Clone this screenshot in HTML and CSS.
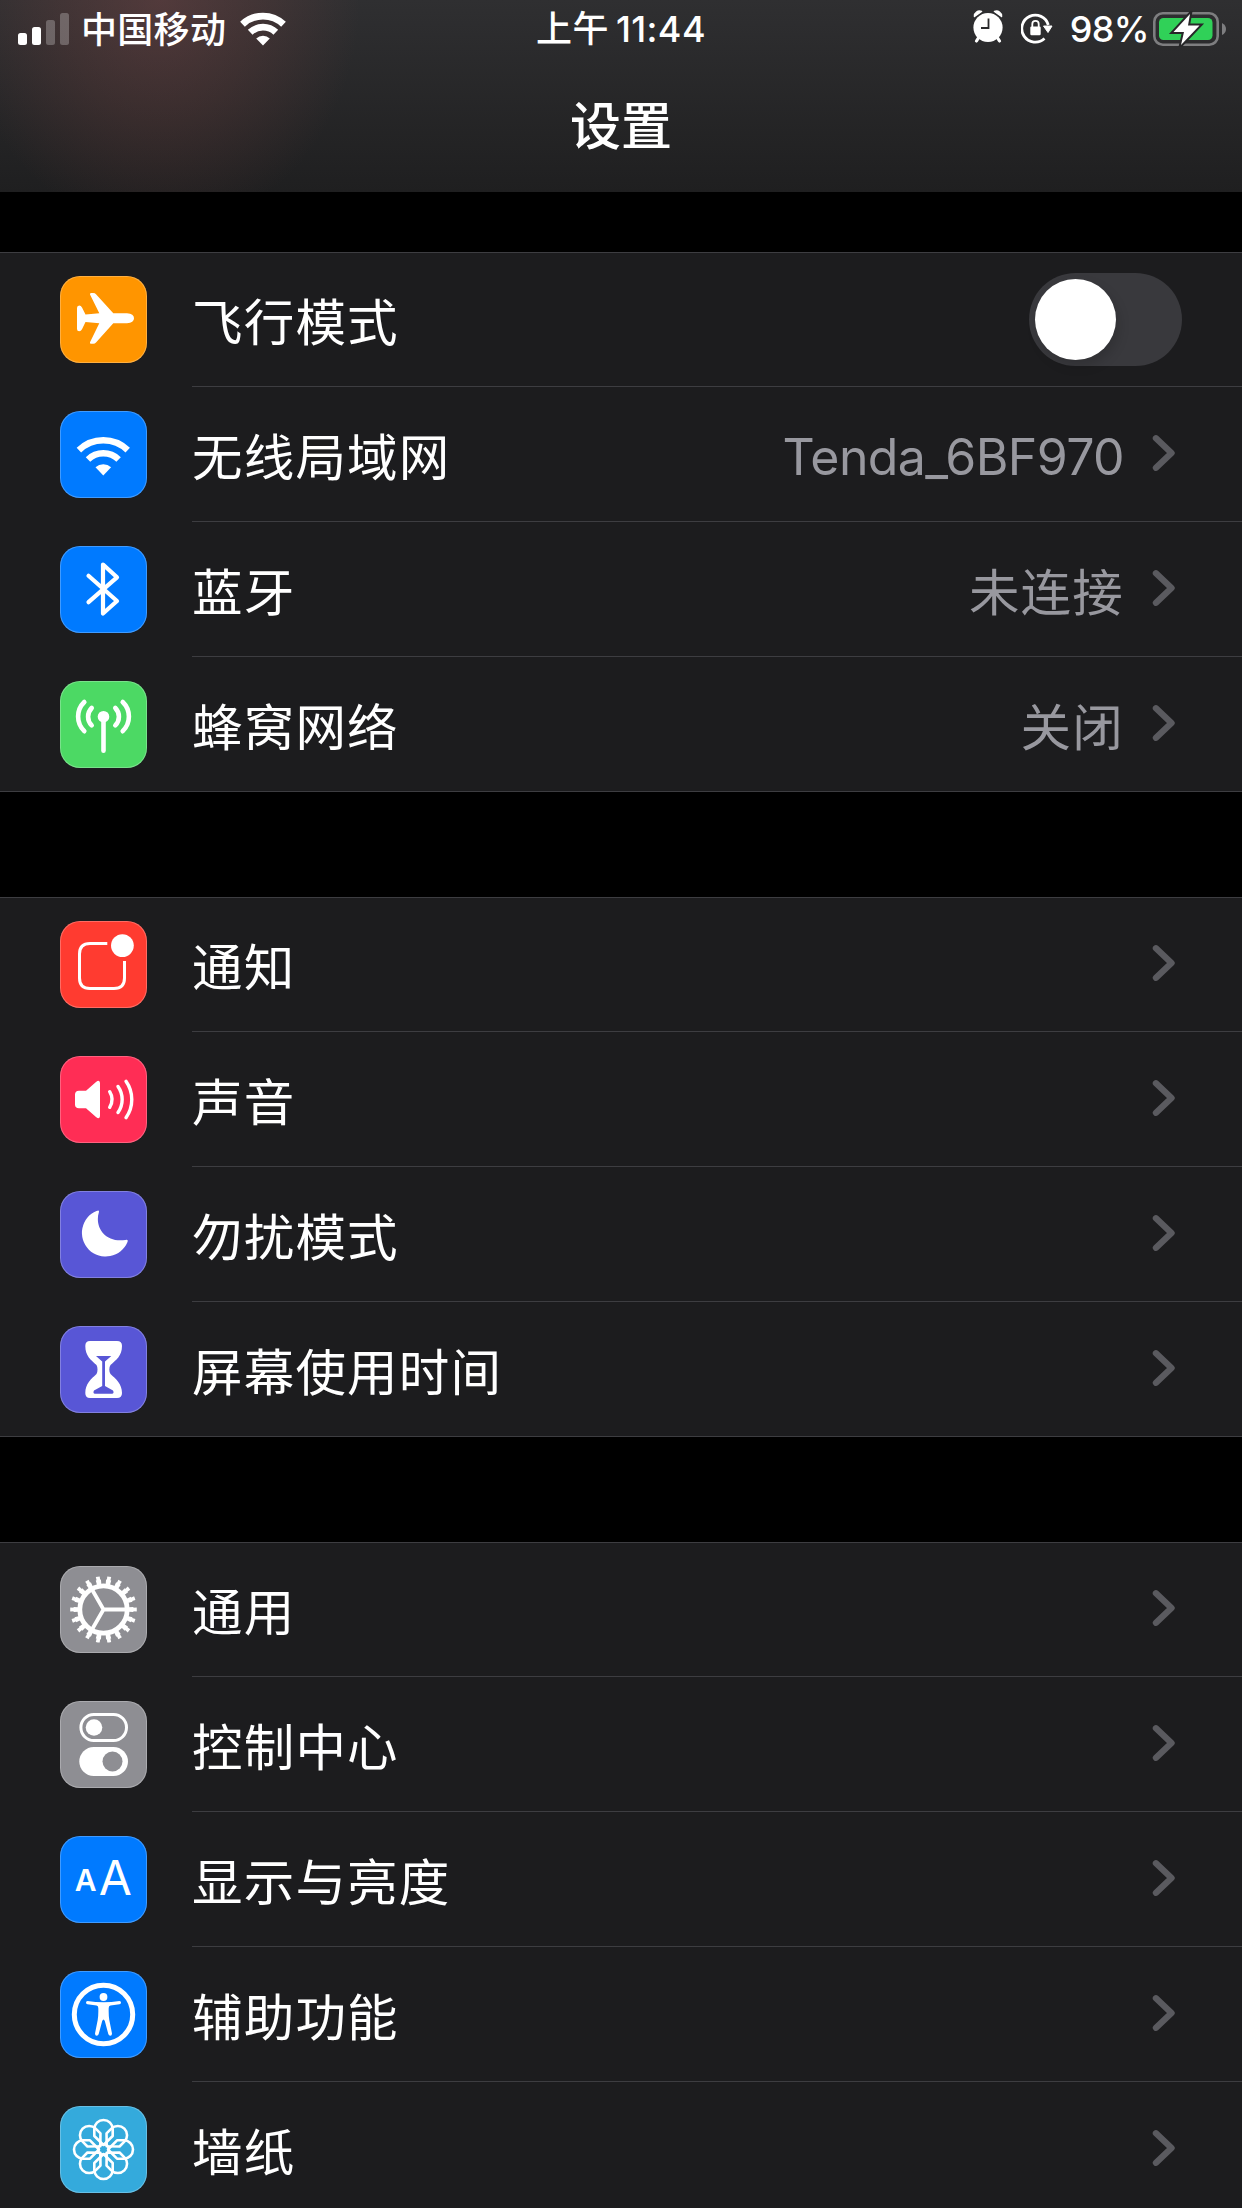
FILE: index.html
```html
<!DOCTYPE html>
<html lang="zh-CN">
<head>
  <meta charset="UTF-8">
  <meta name="viewport" content="width=device-width, initial-scale=1.0">
  <title>设置</title>
  <link rel="stylesheet" href="styles.css">
</head>
<body>
  <svg class="defs" width="0" height="0">
    <symbol id="chevron" viewBox="0 0 24 38">
      <path d="M4 4.3 L19.5 19 L4 33.7" fill="none" stroke="#5a5a5f" stroke-width="6.4" stroke-linecap="round" stroke-linejoin="round"/>
    </symbol>
    <path id="petal" d="M0 -4.5 L-9.2 -13.5 V-20.3 A9.2 9.2 0 0 1 9.2 -20.3 V-13.5 Z"/>
  </svg>

  <header class="header">
    <div class="status-bar">
      <div class="status-left">
        <svg class="signal" width="51" height="33" viewBox="0 0 51 33" fill="#fff">
          <rect x="0" y="20" width="9" height="12" rx="2.5"/>
          <rect x="14" y="14" width="9" height="18" rx="2.5"/>
          <rect x="28" y="7" width="9" height="25" rx="2.5" opacity=".25"/>
          <rect x="42" y="0" width="9" height="32" rx="2.5" opacity=".25"/>
        </svg>
        <span class="carrier">中国移动</span>
        <svg class="wifi" width="46" height="34" viewBox="0 0 46 34">
          <path d="M2.5 12.2 A29.8 29.8 0 0 1 43.5 12.2 M10.2 20.3 A18.6 18.6 0 0 1 35.8 20.3" fill="none" stroke="#fff" stroke-width="6.8"/>
          <path d="M23 33.5 L16.2 26.6 A9.8 9.8 0 0 1 29.8 26.6 Z" fill="#fff"/>
        </svg>
      </div>
      <div class="time"><span class="ampm">上午</span>11:44</div>
      <div class="status-right">
        <svg class="alarm" width="30" height="34" viewBox="0 0 30 34">
          <path d="M6 27 L3.5 31 M24 27 L26.5 31" stroke="#fff" stroke-width="3.2" stroke-linecap="round"/>
          <path d="M1.5 6.5 A5 5 0 0 1 8.5 1.5 Z M28.5 6.5 A5 5 0 0 0 21.5 1.5 Z" fill="#fff" stroke="#fff" stroke-width="1.5" stroke-linejoin="round"/>
          <circle cx="15" cy="17.5" r="14.6" fill="#fff"/>
          <path d="M15.5 8.5 V18 H8" fill="none" stroke="#2a2a2c" stroke-width="1.8"/>
        </svg>
        <svg class="lock" width="32" height="32" viewBox="0 0 32 32">
          <path d="M23.5 25.5 A13.5 13.5 0 1 1 27.3 12" fill="none" stroke="#fff" stroke-width="2.8"/>
          <path d="M22.5 13 H31 L27 19.5 Z" fill="#fff" stroke="#fff" stroke-width="1" stroke-linejoin="round"/>
          <rect x="9.3" y="13.5" width="10.4" height="8.7" rx="1.2" fill="#fff"/>
          <path d="M11.3 14 V11 A3.2 3.2 0 0 1 17.7 11 V14" fill="none" stroke="#fff" stroke-width="1.8"/>
        </svg>
        <span class="percent">98%</span>
        <svg class="battery" width="74" height="36" viewBox="0 0 74 36">
          <rect x="1.3" y="2.3" width="63.4" height="31.4" rx="8.5" fill="none" stroke="#7e7e80" stroke-width="2.6"/>
          <path d="M69 12 Q73 14 73 18 Q73 22 69 24 Z" fill="#7e7e80"/>
          <rect x="6" y="7" width="53.5" height="22" rx="4.5" fill="#30d158"/>
          <path d="M37 3 L20.5 21 H31 L28 34 L46.5 14.5 H35 Z" fill="#fff" stroke="#272729" stroke-width="4" paint-order="stroke"/>
        </svg>
      </div>
    </div>
    <h1 class="title">设置</h1>
  </header>

  <main class="settings">
    <section class="group">
      <div class="row">
        <div class="icon orange">
          <svg viewBox="0 0 87 87" fill="#fff">
            <path d="M17 32 Q17 29.5 19.2 29.5 Q21 29.5 22 31.5 L25.5 38.6 L39.3 37.3 L30 18.5 Q29.5 17 31.2 17 H33.2 Q35 17 36 18.2 L53.3 37.3 H67 Q74 37.8 74 42.3 Q74 47 67 47.3 H53.3 L36 66.6 Q35 67.8 33.2 67.8 H31.2 Q29.5 67.8 30 66.3 L39.3 47.3 L25.5 46 L22 53.2 Q21 55.2 19.2 55.2 Q17 55.2 17 53 Z"/>
          </svg>
        </div>
        <div class="row-body">
          <span class="label">飞行模式</span>
          <div class="toggle"><div class="knob"></div></div>
        </div>
      </div>
      <div class="row">
        <div class="icon blue">
          <svg viewBox="0 0 87 87">
            <path d="M18.9 39.1 A35.1 35.1 0 0 1 67.7 39.1 M28 48.5 A22 22 0 0 1 58.6 48.5" fill="none" stroke="#fff" stroke-width="6.4"/>
            <path d="M43.3 64.5 L35.5 56.3 A11.7 11.7 0 0 1 51.1 56.3 Z" fill="#fff"/>
          </svg>
        </div>
        <div class="row-body">
          <span class="label">无线局域网</span>
          <span class="value latin">Tenda_6BF970</span>
          <svg class="chevron"><use href="#chevron"/></svg>
        </div>
      </div>
      <div class="row">
        <div class="icon blue">
          <svg viewBox="0 0 87 87">
            <path d="M28.5 29.8 L57 55 L43 67.5 V18.5 L57 31.3 L28.5 56.2" fill="none" stroke="#fff" stroke-width="4.2" stroke-linecap="round" stroke-linejoin="round"/>
          </svg>
        </div>
        <div class="row-body">
          <span class="label">蓝牙</span>
          <span class="value">未连接</span>
          <svg class="chevron"><use href="#chevron"/></svg>
        </div>
      </div>
      <div class="row">
        <div class="icon green">
          <svg viewBox="0 0 87 87" fill="none" stroke="#fff" stroke-width="4.6" stroke-linecap="round">
            <circle cx="43.5" cy="35.7" r="5.8" fill="#fff" stroke="none"/>
            <path d="M43.5 37 V69.7"/>
            <path d="M31.7 27 A12.3 12.3 0 0 0 31.7 44.4 M55.3 27 A12.3 12.3 0 0 1 55.3 44.4"/>
            <path d="M24.3 21 A20.3 20.3 0 0 0 24.3 50.2 M62.7 21 A20.3 20.3 0 0 1 62.7 50.2"/>
          </svg>
        </div>
        <div class="row-body">
          <span class="label">蜂窝网络</span>
          <span class="value">关闭</span>
          <svg class="chevron"><use href="#chevron"/></svg>
        </div>
      </div>
    </section>

    <section class="group">
      <div class="row">
        <div class="icon red">
          <svg viewBox="0 0 87 87">
            <path d="M47.3 22.5 H30 Q19.5 22.5 19.5 33 V57 Q19.5 67.5 30 67.5 H54 Q64.5 67.5 64.5 57 V40" fill="none" stroke="#fff" stroke-width="3"/>
            <circle cx="62.4" cy="24.6" r="11.4" fill="#fff"/>
          </svg>
        </div>
        <div class="row-body">
          <span class="label">通知</span>
          <svg class="chevron"><use href="#chevron"/></svg>
        </div>
      </div>
      <div class="row">
        <div class="icon pink">
          <svg viewBox="0 0 87 87">
            <path d="M19 34.7 H26 L36 26 Q37.5 24.8 38.5 24.8 Q40 25 40 27 V60 Q40 62 38.5 62.2 Q37.5 62.2 36 61 L26 52.3 H19 Q15 52.3 15 48.5 V38.5 Q15 34.7 19 34.7 Z" fill="#fff"/>
            <path d="M49.7 35.7 A14.9 14.9 0 0 1 49.7 51.3 M58 30.5 A22.4 22.4 0 0 1 58 56.5 M66 25.3 A31.5 31.5 0 0 1 66 61.7" fill="none" stroke="#fff" stroke-width="3.4" stroke-linecap="round"/>
          </svg>
        </div>
        <div class="row-body">
          <span class="label">声音</span>
          <svg class="chevron"><use href="#chevron"/></svg>
        </div>
      </div>
      <div class="row">
        <div class="icon purple">
          <svg viewBox="0 0 87 87">
            <path d="M36.5 20 Q39.5 18.5 38.9 21.2 C34.5 35 44 52 65.3 49 Q68.5 48 67.5 51 A23.7 23.7 0 1 1 36.5 20 Z" fill="#fff"/>
          </svg>
        </div>
        <div class="row-body">
          <span class="label">勿扰模式</span>
          <svg class="chevron"><use href="#chevron"/></svg>
        </div>
      </div>
      <div class="row">
        <div class="icon purple">
          <svg viewBox="0 0 87 87">
            <path d="M30 15 H57 Q62 15 62 20 C62 30 56 34 50.5 39 Q49.3 40.5 49.3 43.5 Q49.3 46.5 50.5 48 C56 53 62 58 62 67 Q62 72 57 72 H30 Q25.3 72 25.3 67 C25.3 58 31 53 36.5 48 Q37.5 46.5 37.5 43.5 Q37.5 40.5 36.5 39 C31 34 25.3 30 25.3 20 Q25.3 15 30 15 Z" fill="#fff"/>
            <path d="M36 30 H51.3 L45 35.5 V60 L53 64.5 Q54.5 67.5 52 67.7 H35 Q32.5 67.500 34 64.5 L42.2 60 V35.5 Z" fill="#5856d6"/>
          </svg>
        </div>
        <div class="row-body">
          <span class="label">屏幕使用时间</span>
          <svg class="chevron"><use href="#chevron"/></svg>
        </div>
      </div>
    </section>

    <section class="group">
      <div class="row">
        <div class="icon gray">
          <svg viewBox="0 0 87 87" fill="none" stroke="#fff">
            <circle cx="43.5" cy="43.5" r="23.7" stroke-width="4.8"/>
            <circle cx="43.5" cy="43.5" r="27.5" stroke-width="5" pathLength="180" stroke-dasharray="5 5" stroke-dashoffset="2.5"/>
            <circle cx="43.5" cy="43.5" r="31.2" stroke-width="4.2" pathLength="180" stroke-dasharray="3.4 6.6" stroke-dashoffset="1.7"/>
            <path d="M43.5 43.5 H66 M43.5 43.5 L32.3 24 M43.5 43.5 L32.3 63" stroke-width="3.8"/>
          </svg>
        </div>
        <div class="row-body">
          <span class="label">通用</span>
          <svg class="chevron"><use href="#chevron"/></svg>
        </div>
      </div>
      <div class="row">
        <div class="icon gray">
          <svg viewBox="0 0 87 87">
            <rect x="20.9" y="13.5" width="45.6" height="26" rx="13" fill="none" stroke="#fff" stroke-width="3"/>
            <circle cx="34" cy="26.5" r="8.3" fill="#fff"/>
            <rect x="19.3" y="46" width="48.7" height="29" rx="14.5" fill="#fff"/>
            <circle cx="52.5" cy="60.5" r="10" fill="#8e8e93"/>
          </svg>
        </div>
        <div class="row-body">
          <span class="label">控制中心</span>
          <svg class="chevron"><use href="#chevron"/></svg>
        </div>
      </div>
      <div class="row">
        <div class="icon blue">
          <svg class="text-size" viewBox="0 0 87 87" fill="#fff" text-anchor="middle">
            <text x="25.6" y="55" font-size="30" font-weight="600">A</text>
            <text x="55.4" y="59" font-size="48">A</text>
          </svg>
        </div>
        <div class="row-body">
          <span class="label">显示与亮度</span>
          <svg class="chevron"><use href="#chevron"/></svg>
        </div>
      </div>
      <div class="row">
        <div class="icon blue">
          <svg viewBox="0 0 87 87" fill="#fff">
            <circle cx="43.5" cy="43.5" r="29.2" fill="none" stroke="#fff" stroke-width="5"/>
            <circle cx="43.5" cy="26" r="3.9"/>
            <path d="M27.5 30 Q43.5 32.6 59.5 30 Q61 30 61 31.5 Q61 33 59.5 33.3 L50.5 34.6 Q48.7 35 48.7 37 Q48.5 45 49.3 49 L52 62.5 Q52 64.7 50.3 64.7 Q48.8 64.7 48.3 63 L44.8 50 Q43.5 47 42.2 50 L38.7 63 Q38.2 64.7 36.7 64.7 Q35 64.7 35 62.5 L37.7 49 Q38.5 45 38.3 37 Q38.3 35 36.5 34.6 L27.5 33.3 Q26 33 26 31.5 Q26 30 27.5 30 Z"/>
          </svg>
        </div>
        <div class="row-body">
          <span class="label">辅助功能</span>
          <svg class="chevron"><use href="#chevron"/></svg>
        </div>
      </div>
      <div class="row">
        <div class="icon cyan">
          <svg viewBox="0 0 87 87" fill="none" stroke="#fff" stroke-width="2.6" stroke-linejoin="round">
            <g transform="translate(43.5 43.5)">
              <circle r="5.3"/>
              <use href="#petal"/>
              <use href="#petal" transform="rotate(45)"/>
              <use href="#petal" transform="rotate(90)"/>
              <use href="#petal" transform="rotate(135)"/>
              <use href="#petal" transform="rotate(180)"/>
              <use href="#petal" transform="rotate(225)"/>
              <use href="#petal" transform="rotate(270)"/>
              <use href="#petal" transform="rotate(315)"/>
            </g>
          </svg>
        </div>
        <div class="row-body">
          <span class="label">墙纸</span>
          <svg class="chevron"><use href="#chevron"/></svg>
        </div>
      </div>
    </section>
  </main>
</body>
</html>
```

FILE: styles.css
```css
* {
  margin: 0;
  padding: 0;
  box-sizing: border-box;
}

body {
  width: 1242px;
  height: 2208px;
  overflow: hidden;
  background: #000;
  color: #fff;
  font-family: "Noto Sans CJK SC", sans-serif;
}

svg {
  display: block;
}

.defs {
  position: absolute;
}

/* header */
.header {
  height: 192px;
  background:
    radial-gradient(ellipse 200px 230px at 160px 0, rgba(150, 80, 80, 0.34), rgba(140, 75, 72, 0.2) 50%, transparent),
    linear-gradient(#2f2f31, #1f1f20);
}

.status-bar {
  display: grid;
  grid-template-columns: 1fr auto 1fr;
  height: 58px;
  padding: 0 15px 0 18px;
  font-size: 36px;
  font-weight: 500;
  line-height: 58px;
}

.status-left,
.status-right {
  display: flex;
  align-items: center;
}

.status-right {
  justify-content: flex-end;
}

.carrier {
  margin: -5px 14px 0 12px;
  letter-spacing: 0.3px;
}

.time,
.percent {
  font-family: Inter, "Noto Sans CJK SC", sans-serif;
}

.time {
  padding-right: 3px;
  letter-spacing: 0.4px;
}

.ampm {
  margin-right: 7px;
}

.alarm {
  margin: -5px 18px 0 0;
}

.lock {
  margin-right: 17px;
}

.percent {
  margin-right: 4px;
  letter-spacing: -0.6px;
}

.title {
  font-size: 51px;
  font-weight: 500;
  line-height: 131px;
  text-align: center;
}

/* lists */
.settings {
  display: flex;
  flex-direction: column;
  gap: 105px;
  padding-top: 60px;
}

.group {
  background: #1c1c1e;
  box-shadow: inset 0 1px #3d3d41;
}

.row {
  display: flex;
  height: 135px;
  padding-left: 60px;
}

.row:last-child {
  border-bottom: 1px solid #3d3d41;
}

.row:last-child .row-body {
  border-bottom: none;
}

.icon {
  width: 87px;
  height: 87px;
  margin: 24px 45px 0 0;
  border-radius: 20px;
  box-shadow: inset 0 0 0 1px rgba(255, 255, 255, 0.25);
}

.orange { background: #ff9500; }
.blue { background: #007aff; }
.green { background: #4cd964; }
.red { background: #ff3b30; }
.pink { background: #ff2d55; }
.purple { background: #5856d6; }
.gray { background: #8e8e93; }
.cyan { background: #34aadc; }

.text-size {
  font-family: Inter, sans-serif;
}

.row-body {
  flex: 1;
  display: flex;
  align-items: center;
  padding-right: 60px;
  border-bottom: 1px solid #3d3d41;
}

.label,
.value {
  margin-top: -1px;
  font-size: 50.5px;
  letter-spacing: 1.2px;
}

.label {
  flex: 1;
}

.value {
  color: #98989f;
}

.latin {
  padding-top: 7px;
  font-family: Inter, sans-serif;
  font-size: 50px;
  letter-spacing: -0.6px;
}

.chevron {
  width: 24px;
  height: 38px;
  margin: -2px 6px 0 28px;
}

.toggle {
  width: 153px;
  height: 93px;
  padding: 6px;
  border-radius: 47px;
  background: #39393d;
}

.knob {
  width: 81px;
  height: 81px;
  border-radius: 50%;
  background: #fff;
  box-shadow: 3px 6px 12px rgba(0, 0, 0, 0.15);
}
```
